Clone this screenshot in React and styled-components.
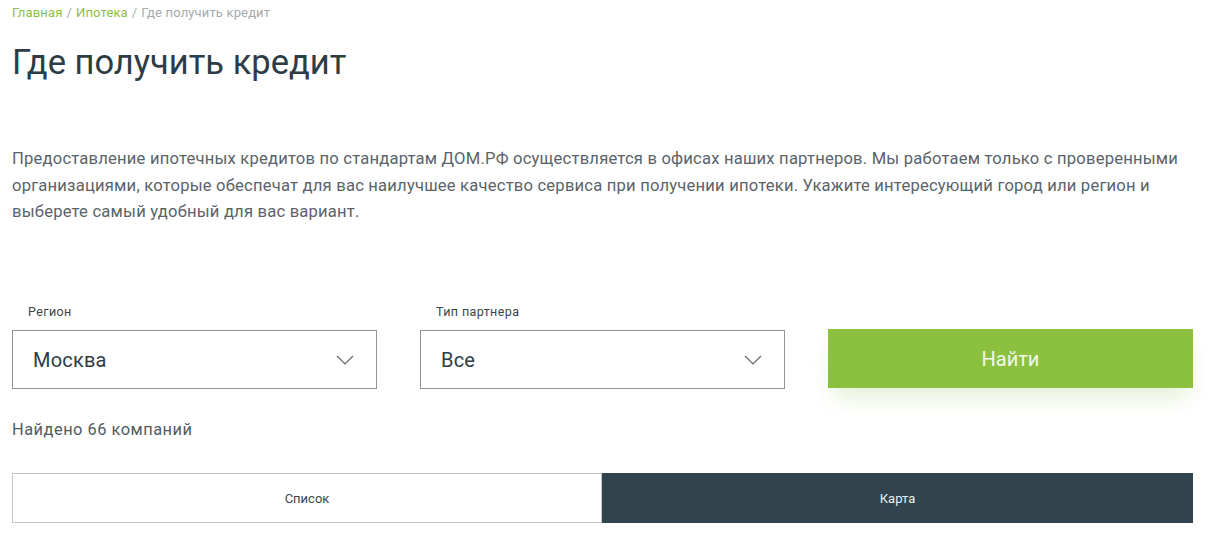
import React from "react";
import styled, { createGlobalStyle } from "styled-components";

const Global = createGlobalStyle`
  html, body { margin: 0; padding: 0; background: #fff; }
  body { font-family: Roboto, "Noto Sans", sans-serif; color: #2f3e46; }
  * { box-sizing: border-box; }
`;

const Page = styled.div`
  width: 1181px;
  margin-left: 12px;
  display: flex;
  flex-direction: column;
`;

const Crumbs = styled.nav`
  font-size: 13px;
  line-height: 16px;
  padding-top: 5px;
  color: #a9adaf;
  display: flex;
  gap: 4px;
  letter-spacing: 0.15px;
`;

const Crumb = styled.a`
  color: ${(p) => (p.$link ? "#8cc04a" : "#a6aaad")};
  text-decoration: none;
`;

const Title = styled.h1`
  margin: 19px 0 0;
  font-size: 34.5px;
  line-height: 44px;
  font-weight: 400;
  color: #2d3c45;
`;

const Lead = styled.p`
  margin: 62px 0 0;
  font-size: 16.6px;
  line-height: 26.5px;
  color: #5a636a;
  letter-spacing: 0.2px;
`;

const LeadLine = styled.span`
  display: block;
  white-space: nowrap;
`;

const Filters = styled.div`
  margin-top: 78px;
  display: grid;
  grid-template-columns: repeat(3, 365px);
  column-gap: 43px;
  align-items: end;
`;

const Field = styled.div`
  display: flex;
  flex-direction: column;
`;

const Label = styled.label`
  font-size: 12.5px;
  line-height: 16px;
  color: #3a454c;
  padding-left: 16px;
  margin-bottom: 10px;
  letter-spacing: 0.4px;
`;

const Select = styled.div`
  height: 59px;
  border: 1px solid #8e9396;
  display: flex;
  align-items: center;
  justify-content: space-between;
  padding: 2px 22px 0 20px;
  font-size: 20px;
  color: #2f3c44;
  letter-spacing: 0.2px;
`;

const Chevron = () => (
  <svg width="18" height="10" viewBox="0 0 18 10" fill="none">
    <path d="M1 1 L9 9 L17 1" stroke="#5f6a70" strokeWidth="1.2" />
  </svg>
);

const FindButton = styled.button`
  height: 59px;
  margin-bottom: 1px;
  border: none;
  background: #8bc13f;
  color: #f2f8ea;
  font-family: inherit;
  font-size: 20px;
  padding-top: 2px;
  box-shadow: 0 14px 22px -6px rgba(120, 180, 40, 0.22);
  cursor: pointer;
`;

const Found = styled.div`
  margin-top: 31px;
  font-size: 16.4px;
  line-height: 20px;
  color: #505b62;
  letter-spacing: 0.5px;
`;

const Tabs = styled.div`
  margin-top: 33px;
  display: grid;
  grid-template-columns: 590px 591px;
  height: 50px;
`;

const Tab = styled.button`
  border: 1px solid ${(p) => (p.$active ? "#31434d" : "#c4c6c7")};
  background: ${(p) => (p.$active ? "#31434d" : "#fff")};
  color: ${(p) => (p.$active ? "#e8eef0" : "#3c464c")};
  font-family: inherit;
  font-size: 13px;
  padding: 2px 0 0;
`;

export default function App() {
  return (
    <>
      <Global />
      <Page>
        <Crumbs>
          <Crumb $link href="#">Главная</Crumb>
          <span>/</span>
          <Crumb $link href="#">Ипотека</Crumb>
          <span>/</span>
          <Crumb>Где получить кредит</Crumb>
        </Crumbs>
        <Title>Где получить кредит</Title>
        <Lead>
          <LeadLine>Предоставление ипотечных кредитов по стандартам ДОМ.РФ осуществляется в офисах наших партнеров. Мы работаем только с проверенными</LeadLine>
          <LeadLine>организациями, которые обеспечат для вас наилучшее качество сервиса при получении ипотеки. Укажите интересующий город или регион и</LeadLine>
          <LeadLine>выберете самый удобный для вас вариант.</LeadLine>
        </Lead>
        <Filters>
          <Field>
            <Label>Регион</Label>
            <Select>
              Москва
              <Chevron />
            </Select>
          </Field>
          <Field>
            <Label>Тип партнера</Label>
            <Select>
              Все
              <Chevron />
            </Select>
          </Field>
          <FindButton>Найти</FindButton>
        </Filters>
        <Found>Найдено 66 компаний</Found>
        <Tabs>
          <Tab>Список</Tab>
          <Tab $active>Карта</Tab>
        </Tabs>
      </Page>
    </>
  );
}
